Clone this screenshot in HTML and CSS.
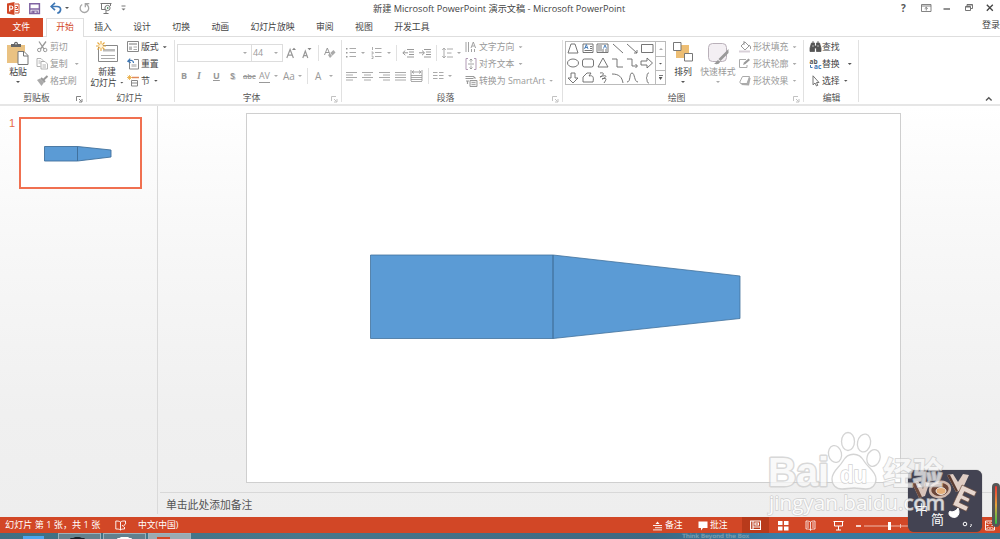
FILE: index.html
```html
<!DOCTYPE html>
<html lang="zh-CN">
<head>
<meta charset="utf-8">
<title>新建 Microsoft PowerPoint 演示文稿 - Microsoft PowerPoint</title>
<link rel="stylesheet" href="styles.css">
</head>
<body>
<div class="app">
  <header class="titlebar">
    <div class="quick">
      <svg width="13" height="13" viewBox="0 0 13 13"><path d="M0 1.6 7.5 0v13L0 11.4z" fill="#d24726"/><path d="M8 2h4v9H8" fill="none" stroke="#d24726"/><path d="M8.500 4.500h2v2h-2M8.500 8.500h2.500" stroke="#d24726" fill="none"/><path d="M2.700 9.500V4h1.500a1.500 1.500 0 0 1 0 3.200H2.700" fill="none" stroke="#fff" stroke-width="1.200"/></svg>
      <svg width="12" height="13" viewBox="0 0 12 13"><path d="M.8 1.800h9.600v9.800H.8z" fill="#fff" stroke="#8064a2" stroke-width="1.500"/><path d="M1 7h9.500" stroke="#8064a2" stroke-width="1.500"/><path d="M3 11.500V9h5.200v2.500" fill="none" stroke="#8064a2" stroke-width="1.200"/><path d="M3.500 9h2v2.500h-2z" fill="#8064a2"/></svg>
      <svg width="13" height="13" viewBox="0 0 13 13"><path d="M1.500 4.500h5.500c5 0 4.500 5.500.3 6.700" fill="none" stroke="#3e77b5" stroke-width="1.700"/><path d="M5 .8 1.200 4.500 5 8.200" fill="none" stroke="#3e77b5" stroke-width="1.700"/></svg>
      <i class="caret dark"></i>
      <svg width="12" height="13" viewBox="0 0 12 13"><path d="M7 2.200A4.300 4.300 0 1 1 3.200 2.500M6.300 5.200V1.600h4" fill="none" stroke="#a6a6a6" stroke-width="1.300"/></svg>
      <svg width="13" height="13" viewBox="0 0 13 13"><path d="M.5 1.500h11M1.500 2v5.500H5M10.500 2v2M3.500 11.500h5M6 8v3.500" fill="none" stroke="#777"/><circle cx="7.500" cy="6" r="2.600" fill="#fff" stroke="#777"/><path d="m7 4.700 2 1.300-2 1.300z" fill="#4a8a60"/></svg>
      <svg width="6" height="8" viewBox="0 0 6 8"><path d="M.5 2h4" stroke="#777"/><path d="M.5 4.500h4l-2 2z" fill="#777"/></svg>
    </div>
    <div class="caption">新建 Microsoft PowerPoint 演示文稿 - Microsoft PowerPoint</div>
    <div class="window-controls">
      <b>?</b>
      <svg width="11" height="10" viewBox="0 0 11 10"><path d="M.5 1.500h9.500v7H.5zM.5 3h9.500M5.250 7.500v-3M3.700 5.700l1.550-1.400 1.550 1.400" fill="none" stroke="#777" stroke-width=".9"/></svg>
      <svg width="8" height="10" viewBox="0 0 8 10"><path d="M.5 6h6.500" stroke="#555" stroke-width="1.300"/></svg>
      <svg width="9" height="10" viewBox="0 0 9 10"><path d="M.5 3.500h5v4h-5zM2 3.500v-2h5.500v4H6M.5 4h5M2 2h5.500" fill="none" stroke="#666" stroke-width=".9"/></svg>
      <svg width="8" height="10" viewBox="0 0 8 10"><path d="m.8 1.700 6 6M6.800 1.700l-6 6" stroke="#444" stroke-width="1.300"/></svg>
    </div>
  </header>

  <nav class="tabs">
    <a class="tab file">文件</a><a class="tab active">开始</a><a class="tab">插入</a><a class="tab">设计</a><a class="tab">切换</a><a class="tab">动画</a><a class="tab">幻灯片放映</a><a class="tab">审阅</a><a class="tab">视图</a><a class="tab">开发工具</a><a class="signin">登录</a>
  </nav>

  <section class="ribbon">
    <div class="group clipboard">
      <div class="body">
        <div class="big">
          <svg width="22" height="25" viewBox="0 0 22 25"><path d="M0 4h18v18H0z" fill="#eac282"/><path d="M4 6V3h3c0-3 4-3 4 0h3v3z" fill="#666"/><circle cx="9" cy="2.700" r=".8" fill="#fff"/><path d="M11 10.500h6l4 4v9H11z" fill="#fff" stroke="#777"/><path d="M16.500 10.500v4.500H21" fill="none" stroke="#777"/></svg>
          <span>粘贴</span><i class="caret dark"></i>
        </div>
        <div class="stack off">
          <div class="cmd"><svg width="12" height="12" viewBox="0 0 12 12"><path d="m2.500.5 5 7.500M9.500.5 4 8" stroke="#999" stroke-width="1.300"/><circle cx="2.700" cy="9" r="1.700" fill="none" stroke="#999"/><circle cx="8.700" cy="9" r="1.700" fill="none" stroke="#999"/></svg><span>剪切</span></div>
          <div class="cmd"><svg width="12" height="12" viewBox="0 0 12 12"><path d="M4 8.500H.5v-8h4l2 2V4M4.500 3.500h4l2.500 2.500v5H4.500zM2 3h2M2 5h2M6 7h3.500M6 9h3.500" fill="#fff" stroke="#aaa" stroke-width=".9"/></svg><span>复制</span><i class="caret far"></i></div>
          <div class="cmd"><svg width="12" height="12" viewBox="0 0 12 12"><path d="m.5 5 3-1.500 4 4L5 11z" fill="#aaa"/><path d="m4.500 3 4 4M7 4.700 11 1" stroke="#999" stroke-width="2"/></svg><span>格式刷</span></div>
        </div>
      </div>
      <div class="label"><span>剪贴板</span><svg class="launch" width="7" height="7" viewBox="0 0 7 7"><path d="M.5 5V.5H5M3 3l2.500 2.500M6 3v3H3" fill="none" stroke="currentColor" stroke-width=".9"/></svg></div>
    </div>

    <div class="group slides">
      <div class="body">
        <div class="big">
          <svg width="23" height="25" viewBox="0 0 23 25"><path d="M3 4.500h18.500v16H2.500V6" fill="#fff" stroke="#888"/><path d="M7 8h12v2.500H7z" fill="#bbb"/><path d="M5 14.500h14M5 17.500h14" stroke="#aaa"/><path d="M5 0v10M0 5h10M1.500 1.500l7 7M8.500 1.500l-7 7" stroke="#e9a93c" stroke-width="1.100"/><circle cx="5" cy="5" r="2" fill="#fff5dd"/></svg>
          <span>新建</span><span class="second">幻灯片<i class="caret dark"></i></span>
        </div>
        <div class="stack">
          <div class="cmd"><svg width="13" height="12" viewBox="0 0 13 12"><path d="M.5.5h11v10H.5z" fill="#fff" stroke="#888"/><path d="M2 2h8v2H2zM2 5.500h3v3.500H2z" fill="#bbb"/><path d="M6.500 6H10M6.500 8.500H10" stroke="#aaa"/></svg><span>版式</span><i class="caret dark"></i></div>
          <div class="cmd"><svg width="13" height="12" viewBox="0 0 13 12"><path d="M2.500 3v8h9V1.500H7" fill="#fff" stroke="#888"/><path d="M4.500 6h5v3h-5z" fill="#ccc"/><path d="M6.500 5C6.500 2 4 2 1.200 3M3.200.7.7 3.300l3 1.500" fill="none" stroke="#3e77b5" stroke-width="1.200"/></svg><span>重置</span></div>
          <div class="cmd"><svg width="13" height="12" viewBox="0 0 13 12"><path d="M4.500 5.500h6v5.500h-6zM4.500 8h6" fill="#fff" stroke="#888"/><path d="M5 2.500h7" stroke="#e08a5a" stroke-width="1.500"/><path d="M2.500 0v5M0 2.500h5M.7.7l3.600 3.600M4.300.7.7 4.300" stroke="#e9a93c" stroke-width=".8"/></svg><span>节</span><i class="caret dark"></i></div>
        </div>
      </div>
      <div class="label"><span>幻灯片</span></div>
    </div>

    <div class="group font off">
      <div class="body rows">
        <div class="row font-a">
          <div class="combo"><i class="caret"></i></div><div class="combo size">44<i class="caret"></i></div>
          <svg width="11" height="12" viewBox="0 0 11 12"><path d="m.8 11 3.300-8.500L7.400 11M2 8.200h4.200" fill="none" stroke="#999" stroke-width="1.200"/><path d="M6 3 8 .8 10 3z" fill="#888"/></svg>
          <svg width="11" height="12" viewBox="0 0 11 12"><path d="m.8 11 2.500-7 2.500 7M1.800 8.700h3" fill="none" stroke="#999" stroke-width="1.200"/><path d="M5.500 1h4l-2 2.200z" fill="#888"/></svg>
          <i class="sep"></i>
          <svg width="12" height="12" viewBox="0 0 12 12"><path d="m.5 8 2.800-7L6 7.500M1.500 5.500H5" fill="none" stroke="#999"/><path d="m4 8 5.500-5 2 2.500L6 11z" fill="#aaa"/><path d="m6 6 2.500 3" stroke="#eee" stroke-width=".8"/></svg>
        </div>
        <div class="row font-b">
          <b>B</b><em>I</em><u>U</u><b class="shadow">S</b><s>abc</s><span class="spacing">AV</span><i class="caret"></i><span class="case">Aa</span><i class="caret"></i><i class="sep"></i><span class="color">A</span><i class="caret"></i>
        </div>
      </div>
      <div class="label"><span>字体</span><svg class="launch" width="7" height="7" viewBox="0 0 7 7"><path d="M.5 5V.5H5M3 3l2.500 2.500M6 3v3H3" fill="none" stroke="currentColor" stroke-width=".9"/></svg></div>
    </div>

    <div class="group paragraph off">
      <div class="body">
        <div class="rows">
          <div class="row para-a">
            <svg width="11" height="12" viewBox="0 0 11 12"><path d="M3.500 1.500H10M3.500 5.500H10M3.500 9.500H10" stroke="#aaa"/><path d="M0 1h1.500v1.500H0zM0 5h1.500v1.500H0zM0 9h1.500v1.500H0z" fill="#999"/></svg><i class="caret"></i>
            <svg width="11" height="12" viewBox="0 0 11 12"><path d="M4 1.500h6.500M4 5.500h6.500M4 9.500h6.500" stroke="#aaa"/><path d="M1.500 0v3M.5 5h1.500v2H.5M.5 9h1.500v2.500H.5" fill="none" stroke="#999" stroke-width=".8"/></svg><i class="caret"></i>
            <i class="sep"></i>
            <svg width="12" height="12" viewBox="0 0 12 12"><path d="M5 2.500h7M7 5h5M7 7.500h5M5 10h7M6 5.800H1M3.300 3.500.8 5.800l2.500 2.400" fill="none" stroke="#999"/></svg>
            <svg width="12" height="12" viewBox="0 0 12 12"><path d="M5 2.500h7M7 5h5M7 7.500h5M5 10h7M0 5.800h5M3 3.500l2.500 2.300L3 8.200" fill="none" stroke="#999"/></svg>
            <i class="sep"></i>
            <svg width="12" height="12" viewBox="0 0 12 12"><path d="M5 2h6M5 6h4.500M5 10h6M2 1v10M.3 3 2 1l1.700 2M.3 9 2 11l1.700-2" fill="none" stroke="#aaa"/></svg><i class="caret"></i>
          </div>
          <div class="row para-b">
            <svg width="12" height="10" viewBox="0 0 12 10"><path d="M0 1.500h11M0 4h7M0 6.500h11M0 9h7" stroke="#aaa"/></svg>
            <svg width="12" height="10" viewBox="0 0 12 10"><path d="M0 1.500h11M2 4h7M0 6.500h11M2 9h7" stroke="#aaa"/></svg>
            <svg width="12" height="10" viewBox="0 0 12 10"><path d="M0 1.500h11M4 4h7M0 6.500h11M4 9h7" stroke="#aaa"/></svg>
            <svg width="12" height="10" viewBox="0 0 12 10"><path d="M0 1.500h11M0 4h11M0 6.500h11M0 9h11" stroke="#aaa"/></svg>
            <svg width="13" height="12" viewBox="0 0 13 12"><path d="M1 5.500h11M1 7.500h11M1 9.500h11M1 11.500h11" stroke="#aaa"/><path d="M1 0v11M12 0v11M2 2h9M4 .5 2 2l2 1.500M9 .5 11 2 9 3.500" fill="none" stroke="#999" stroke-width=".9"/></svg>
            <i class="sep"></i>
            <svg width="12" height="10" viewBox="0 0 12 10"><path d="M0 1.500h4.500M6 1.500h4.500M0 4.500h4.500M6 4.500h4.500M0 7.500h4.500M6 7.500h4.500" stroke="#aaa" stroke-width="1.100"/></svg><i class="caret"></i>
          </div>
        </div>
        <div class="stack">
          <div class="cmd"><svg width="13" height="12" viewBox="0 0 13 12"><path d="M1 1v10M3.500 1v10M6.500 8v3M9.500 8v3M6 7l2.300-6 2.300 6M7 5h2.600" fill="none" stroke="#999" stroke-width=".9"/></svg><span>文字方向</span><i class="caret"></i></div>
          <div class="cmd"><svg width="13" height="12" viewBox="0 0 13 12"><path d="M3 .5H1v11h2M9 .5h2v11H9" fill="none" stroke="#b19bb5"/><path d="M3 6h6M6 1v3.500M6 11V7.500M4.500 2.500 6 1l1.500 1.500M4.500 9.500 6 11l1.500-1.500" fill="none" stroke="#999" stroke-width=".9"/></svg><span>对齐文本</span><i class="caret"></i></div>
          <div class="cmd"><svg width="13" height="12" viewBox="0 0 13 12"><path d="M.5 1.500h8l2 2M.5 3.500h8M1 6h3M2.500 6v3" fill="none" stroke="#999" stroke-width="1.200"/><path d="M5 5.500h7v6H5z" fill="#eee" stroke="#999"/><path d="M6.500 7.500h4M6.500 9.500h4" stroke="#aaa"/></svg><span>转换为 SmartArt</span><i class="caret"></i></div>
        </div>
      </div>
      <div class="label"><span>段落</span><svg class="launch" width="7" height="7" viewBox="0 0 7 7"><path d="M.5 5V.5H5M3 3l2.500 2.500M6 3v3H3" fill="none" stroke="currentColor" stroke-width=".9"/></svg></div>
    </div>

    <div class="group drawing">
      <div class="body">
        <div class="gallery">
          <svg width="89" height="42" viewBox="0 0 89 42" fill="none" stroke="#666" stroke-width=".9">
            <path d="M2 11 5 2h4l3 9z"/><path d="M17 2h10v8.500H17zM24 4.500h2M24 6.500h2M18.500 8.500H26"/><path d="M31 2h11v8.500H31zM33 3v6.500M35 3v6.500M37 7v3M40 7v3"/><path d="m47 2 10 9M61 2l10 9M71 8v3h-3"/><path d="M75.500 2.500h11.500v8H75.500z"/>
            <ellipse cx="7" cy="21" rx="5.500" ry="4"/><rect x="16.500" y="17" width="11" height="8" rx="2"/><path d="m32 25 5-9 5 9z"/><path d="M46 17h5v8h6M61 17h5v7h5M69.500 22l2 2-2 2"/><path d="M75 19h6v-3l5.500 5-5.500 5v-3h-6z"/>
            <path d="M5 31h4v5h3l-5 5-5-5h3z"/><path d="M17 40v-5l4-4h4l-2 3c4-1 5 1 4 6z"/><path d="M34 31c5-1 4 2 0 4 7-3 8 0 2 2 6-2 4 1 2 4"/><path d="M46 32c7 0 10 3 11 9"/><path d="M61 40c4 0 2-9 5-9s2 9 6 9"/><path d="M83 31c-3 0-1 4-3 5 2 1 0 5 3 5"/>
            <path d="m18.500 7 1.800-4.500L22 7M19 5.500h2.500M37.500 6.500l1.500-3.500 1.500 3.500" stroke="#3e77b5"/>
          </svg>
          <div class="scroll"><div><i class="caret up"></i></div><div><i class="caret dark"></i></div><div class="more"><i class="caret dark"></i></div></div>
        </div>
        <div class="big arrange">
          <svg width="22" height="25" viewBox="0 0 22 25"><path d="M4 4h13v13H4z" fill="#edbe74"/><path d="M1.500 1.500h7.500v8H1.500zM12.500 12.500h8v7.500h-8z" fill="#fff" stroke="#777"/></svg>
          <span>排列</span><i class="caret dark"></i>
        </div>
        <div class="big styles off">
          <svg width="24" height="25" viewBox="0 0 24 25"><rect x="2.500" y="2.500" width="18" height="18" rx="4" fill="#f3eff3" stroke="#b9b0b9"/><path d="M22.500 8v4l-8 8-2-2zM12 19l2 2c-1 3-4 2-6 2 2-1 2-3 4-4z" fill="#999"/></svg>
          <span>快速样式</span><i class="caret"></i>
        </div>
        <div class="stack off">
          <div class="cmd"><svg width="13" height="12" viewBox="0 0 13 12"><path d="m2 5 4-4 4 4-4 4zM5 0v4M10 4c2 1 1.500 3 1.500 4" fill="#fff" stroke="#999"/><path d="M0 9.500h11v2H0z" fill="#d8d0d8"/></svg><span>形状填充</span><i class="caret"></i></div>
          <div class="cmd"><svg width="13" height="12" viewBox="0 0 13 12"><path d="M7 1.500H.5v8H8V7" fill="none" stroke="#aaa"/><path d="m4 7 1-2.500L9.500.5l1.500 1.500-4.500 4z" fill="#999"/></svg><span>形状轮廓</span><i class="caret"></i></div>
          <div class="cmd"><svg width="13" height="12" viewBox="0 0 13 12"><path d="m2 10 8 .5 1.500-7-1-1.500z" fill="#aaa"/><path d="M3.500 1.500h7l-2.500 7H1.500L.8 7z" fill="#fff" stroke="#aaa"/></svg><span>形状效果</span><i class="caret"></i></div>
        </div>
      </div>
      <div class="label"><span>绘图</span><svg class="launch pale" width="7" height="7" viewBox="0 0 7 7"><path d="M.5 5V.5H5M3 3l2.500 2.500M6 3v3H3" fill="none" stroke="currentColor" stroke-width=".9"/></svg></div>
    </div>

    <div class="group editing">
      <div class="body"><div class="stack">
        <div class="cmd"><svg width="12" height="12" viewBox="0 0 12 12"><path d="M2 2h3v3h2V2h3l1.500 5v3.500H7V7H5v3.500H.5V7zM2.500 1h2M7.500 1h2" fill="#555" stroke="#555" stroke-width=".8"/><path d="M3.500 4v2M8.500 4v2" stroke="#ccc" stroke-width=".8"/></svg><span>查找</span></div>
        <div class="cmd"><svg class="replace" width="12" height="12" viewBox="0 0 12 12"><text class="mini" x="0" y="5.500">ab</text><text class="mini blue" x="4.500" y="11">ac</text><path d="M1 7v2.500h2" fill="none" stroke="#3e77b5"/></svg><span>替换</span><i class="caret dark wide"></i></div>
        <div class="cmd"><svg width="12" height="12" viewBox="0 0 12 12"><path d="M3.500.8v9l2-1.800 1.500 3 1.300-.7L7 7.500h2.500z" fill="#fff" stroke="#666" stroke-width=".9"/></svg><span>选择</span><i class="caret dark"></i></div>
      </div></div>
      <div class="label"><span>编辑</span></div>
    </div>
    <svg class="collapse" width="8" height="6" viewBox="0 0 8 6"><path d="m1 4.500 2.800-2.700 2.800 2.700" fill="none" stroke="#555" stroke-width="1.400"/></svg>
  </section>

  <main class="workspace">
    <aside class="outline">
      <span class="number">1</span>
      <div class="thumb"><svg width="119" height="68" viewBox="0 0 119 68"><path d="M23.500 27.500h33v14.500h-33zM56.500 27.500l33.500 3.500v7l-33.500 4z" fill="#5b9bd5" stroke="#41719c" stroke-width=".9"/></svg></div>
    </aside>
    <section class="editor">
      <div class="stage"><div class="slide"><svg width="653" height="368" viewBox="0 0 653 368"><path d="M123.500 141h182.500v83.500H123.500zM306 141l187 21v42.500L306 224.500z" fill="#5b9bd5" stroke="#41719c" stroke-width=".8"/></svg></div></div>
      <div class="notes">单击此处添加备注</div>
    </section>
  </main>

  <footer class="status">
    <span class="count">幻灯片 第 1 张，共 1 张</span>
    <svg width="12" height="11" viewBox="0 0 12 11"><path d="M5.500 2v8M5.500 2C4 1 2.500 1 .8 1v8c2 0 3.500 0 4.700 1 1-1 2-1 4-1V7M5.500 2C7 1 8 1 10.500 1v2M7 5l1.300 1.500L11 3" fill="none" stroke="#fff" stroke-width=".9"/></svg>
    <span class="language">中文(中国)</span>
    <div class="views">
      <svg width="10" height="11" viewBox="0 0 10 11"><path d="M0 5.500h9M2 7.700h7M0 9.900h9" stroke="#fff" stroke-width=".9"/><path d="m2.500 4 2-2.500 2 2.500z" fill="#fff"/></svg><span>备注</span>
      <svg width="10" height="11" viewBox="0 0 10 11"><path d="M.5 1.500h9V8H5l-2 2.500V8H.5z" fill="#fff"/></svg><span>批注</span>
      <span class="view current"><svg width="11" height="11" viewBox="0 0 11 11"><path d="M.6 1h10v8.500H.6zM3 1v8.500M3 7h7.500M5 3h3.500v2H5z" fill="none" stroke="#fff" stroke-width="1.100"/></svg></span>
      <svg width="12" height="11" viewBox="0 0 12 11"><path d="M1 1h4.500v4H1zM7 1h4.500v4H7zM1 6.500h4.500v4H1zM7 6.500h4.500v4H7z" fill="#fff"/></svg>
      <svg width="12" height="11" viewBox="0 0 12 11"><path d="M5.500 2v8.500M5.500 2C4 1 2.500 1 1 1v8c2 0 3.500 0 4.500 1 1-1 2.500-1 4.500-1V1C8 1 7 1 5.500 2M2 3h2M2 5h2M2 7h2M7 3h2M7 5h2M7 7h2" fill="none" stroke="#fff" stroke-width=".8"/></svg>
      <svg width="12" height="11" viewBox="0 0 12 11"><path d="M.5 1.500h10M1.500 2v4h8V2M5.500 6v4M3 10h5" fill="none" stroke="#fff"/></svg>
      <svg width="129" height="11" viewBox="0 0 129 11"><path d="M0 6h5" stroke="#fff" stroke-width="1.500"/><path d="M8 6h46M44.500 4v4" stroke="#f3c7bb" stroke-width=".9"/><path d="M32 2h3v8h-3z" fill="#fff"/></svg>
      <svg width="11" height="11" viewBox="0 0 11 11"><path d="M.5 1h9v9h-9zM1.500 5.500h2M6.500 5.500h2M5 2v2M5 7v2M1.500 2l2 2M8.500 2l-2 2M1.500 9l2-2M8.500 9l-2-2" fill="none" stroke="#fff" stroke-width=".9"/></svg>
    </div>
  </footer>
  <div class="taskbar">
    <div class="task explorer"></div><div class="task qq"></div><div class="task browser"></div><div class="task ppt"></div><span class="desktop-text">Think Beyond the Box</span>
  </div>
</div>

<svg class="watermark" width="185" height="90" viewBox="765 428 185 90">
  <g fill="#fff" fill-opacity=".72" stroke="#c9c9c9" stroke-opacity=".8" stroke-width="1.300">
    <ellipse cx="848" cy="441.500" rx="6.500" ry="9"/><ellipse cx="864" cy="443" rx="6.500" ry="9" transform="rotate(12 864 443)"/><ellipse cx="835" cy="454" rx="6.500" ry="8.500" transform="rotate(-12 835 454)"/><ellipse cx="873.500" cy="458" rx="6.500" ry="8.500" transform="rotate(18 873.500 458)"/>
    <path d="M843 461c5-9 16-9 21 0 4 7 12 10 12 18 0 6-4 10-10 10-5 0-7-1-12-1s-7 1-12 1c-6 0-10-4-10-10 0-8 7-11 11-18z"/>
  </g>
  <g class="outlined"><text class="brand" x="768" y="486" textLength="61" lengthAdjust="spacingAndGlyphs">Bai</text><text class="brand cn" x="883" y="484" textLength="60" lengthAdjust="spacingAndGlyphs">经验</text></g>
  <g class="filled"><text class="du" x="840" y="483" textLength="27" lengthAdjust="spacingAndGlyphs">du</text><text class="url" x="769" y="510" textLength="176" lengthAdjust="spacingAndGlyphs">jingyan.baidu.com</text></g>
</svg>
<div class="ime">
  <svg width="74" height="62" viewBox="0 0 74 62">
    <path d="m4 13 6-2 5 8 2-7 5-1-5 15-6 2z" fill="#d9c4ba"/><path d="m4 13 7 15 3-1-7-15z" fill="#6c4a3d"/>
    <ellipse cx="32" cy="19.500" rx="10" ry="7.500" transform="rotate(-12 32 19.500)" fill="#6c4639" stroke="#d2b9ad" stroke-width="2.500"/>
    <ellipse cx="33" cy="21" rx="5" ry="3.500" fill="#e3ad78" stroke="#fff" stroke-width=".8"/>
    <path d="m39 5 6-1 5 8 5-8 6 1-7 15-6 2z" fill="#e0cdc4"/><path d="m39 5 9 17 2-1-8-16z" fill="#5b3b30"/>
    <g transform="translate(54 15) rotate(25)"><path d="M0 0h16v5H5v4h8v4H5v4h10v5H0z" fill="#e6d6ce" stroke="#6a4a3a" stroke-width=".6"/></g>
    <g font-family="Noto Sans CJK SC" font-size="13" fill="#fff"><text x="7" y="44">中</text><text x="23" y="53.500">简</text></g>
    <path d="M42 41c2 2 6 0 8-3 3 6-1 11-6 9-3-1-4-4-2-6z" fill="#fff" stroke="#fff"/><circle cx="57" cy="54" r="1.800" fill="none" stroke="#fff"/><path d="M63 54q1 1-.7 3" stroke="#fff" fill="none"/>
  </svg>
</div>
<div class="meter"></div>
</body>
</html>
```

FILE: styles.css
```css
* { box-sizing: border-box; }
body { margin: 0; width: 1000px; height: 539px; overflow: hidden; background: #fff; color: #444; font: 9px/12px "Open Sans", "Noto Sans CJK SC", sans-serif; white-space: nowrap; }
svg { display: block; flex: none; }
.app { display: flex; flex-direction: column; height: 539px; }

.caret { display: inline-block; flex: none; width: 4px; height: 2px; background: #aaa; clip-path: polygon(0 0, 100% 0, 50% 100%); }
.caret.dark { background: #555; }
.caret.up { transform: rotate(180deg); }
.sep { width: 1px; height: 16px; background: #e1e1e1; }
.off { color: #999; }

.titlebar { display: grid; grid-template-columns: 366px 252px 1fr; align-items: center; height: 18px; padding-left: 7px; }
.quick { display: grid; grid-template-columns: 22px 21px 15px 14px 21px 21px 10px; align-items: center; padding-bottom: 2px; }
.caption { font-size: 9.200px; }
.window-controls { display: grid; grid-template-columns: 20px 22px 22px 21px 14px; align-items: center; justify-content: end; padding-bottom: 2px; }
.window-controls b { font-size: 10px; color: #555; }

.tabs { display: flex; height: 19px; box-shadow: inset 0 -1px #dedede; }
.tab { padding: 3px 10.700px; font-size: 8.850px; }
.file { width: 43px; padding-left: 12.500px; background: #d24726; color: #fff; }
.active { width: 38px; margin: 0 -.5px 0 3px; padding: 2px 0; border: 1px solid #dedede; border-bottom: 0; background: #fff; color: #d24726; text-align: center; }
.signin { margin-left: auto; padding-top: 1px; }

.ribbon { display: flex; height: 69px; padding-top: 1px; border-bottom: 2px solid #e6e6e6; }
.group { display: flex; flex-direction: column; position: relative; font-size: 8.900px; }
.group::after { content: ""; position: absolute; right: 0; top: 2px; width: 1px; height: 62px; background: #e1e1e1; }
.clipboard { width: 87px; }
.slides { width: 88px; }
.font { width: 167px; }
.paragraph { width: 221px; }
.drawing { width: 241px; }
.editing { width: 55px; }
.body { display: flex; height: 53px; }
.label { display: flex; align-items: center; height: 14px; color: #555; }
.label > span { flex: 1; padding-top: 1px; text-align: center; }
.slides .label > span { padding-right: 3px; }
.launch { width: 7px; margin: 4px 4px 0 3px; color: #777; }
.clipboard .launch { margin-left: 3px; }
.font .launch, .paragraph .launch, .pale { color: #bbb; }
.big { display: flex; flex-direction: column; align-items: center; width: 36px; padding-top: 3px; }
.big > span { margin: -1px 0 3px; line-height: 13px; }
.slides .big { width: 40px; }
.slides .big > span { margin: -1px 0 0; }
.slides .big > .second { display: flex; align-items: center; gap: 3px; margin-top: -2px; }
.stack { display: grid; grid-template-rows: repeat(3, 16.700px); padding-top: 1px; }
.cmd { display: flex; align-items: center; }
.cmd svg { width: 13px; }
.clipboard .cmd svg { margin-right: 1px; }
.cmd .caret { margin-left: 4px; }
.cmd .far { margin-left: 7px; }
.cmd .wide { margin-left: 8px; }
.slides .cmd svg { margin-right: 1px; }

.rows { display: flex; flex-direction: column; }
.row { display: grid; align-items: center; }
.font-a { grid-template-columns: 74px 35px 16px 16px 6px 12px; height: 30px; padding-left: 2px; }
.font-b { grid-template-columns: 16px 16px 17px 13px 16px 15px 9px 15px 9px 8px 14px 5px; height: 14px; padding-left: 6px; }
.font-a .combo { display: flex; align-items: center; justify-content: flex-end; width: 75px; height: 18px; padding-right: 4px; border: 1px solid #ddd; color: #999; }
.font-a .size { width: 32px; justify-content: space-between; padding-left: 1px; }
.font-b > * { font-size: 9px; }
.font-b em { font-family: "Liberation Serif"; font-size: 10px; font-weight: bold; }
.font-b u { font-weight: bold; }
.font-b s { font-size: 7.500px; font-weight: 600; }
.shadow { text-shadow: 1px 1px #ccc; }
.spacing { height: 13px; border-bottom: 1px solid #999; width: 11px; letter-spacing: -.3px; line-height: 11px; }
.font-b .case, .font-b .color { font-size: 10px; }

.paragraph .rows { width: 123px; padding-left: 4px; }
.para-a { grid-template-columns: 15px 10px 16px 9px 6px 17px 17px 6px 15px 5px; height: 30px; }
.para-b { grid-template-columns: 16px 17px 16px 15px 18px 5px 15px 5px; height: 14px; }
.paragraph .cmd svg { margin-right: 1px; }

.gallery { display: flex; width: 101px; height: 44px; margin: 3px 0 0 2px; border: 1px solid #bbb; }
.scroll { display: grid; grid-template-rows: 1fr 1fr 1fr; width: 10px; border-left: 1px solid #bbb; }
.scroll div { display: flex; align-items: center; justify-content: center; }
.scroll div + div { border-top: 1px solid #bbb; }
.more .caret { height: 3px; margin-top: 2px; }
.more { background: linear-gradient(#777, #777) center 4px / 4px 1px no-repeat; }
.arrange { margin-left: -1px; }
.styles { margin-left: -1px; }
.drawing .stack { margin-left: 3px; }
.drawing .cmd svg { margin-right: 1px; }
.editing .stack { padding-left: 5px; }
.replace { overflow: visible; }
.mini { font: bold 6.500px "Open Sans"; fill: #555; }
.blue { fill: #3e77b5; }
.collapse { margin: 58px 7px 0 auto; }

.workspace { display: flex; height: 411px; background: linear-gradient(#fff 0, #f8f8f8 30%, #f0f0f0 75%, #eee); }
.outline { display: flex; align-items: flex-start; width: 158px; height: 408px; padding: 11px 0 0 9px; border-right: 1px solid #dadada; }
.number { width: 10px; font: 11px/12px "Liberation Sans"; color: #e8694a; }
.thumb { width: 123px; height: 72px; background: #fff; border: 2px solid #f07050; }
.editor { display: flex; flex-direction: column; flex: 1; padding-left: 2px; }
.stage { height: 387px; padding: 7px 0 0 86px; border-bottom: 1px solid #d8d8d8; }
.slide { width: 655px; height: 370px; border: 1px solid #cfcfcf; background: #fff; }
.notes { padding: 4px 6px; font-size: 10.800px; line-height: 15px; color: #555; }

.status { display: flex; align-items: center; height: 16px; background: #d24726; color: #fff; padding-left: 5px; }
.count { width: 110px; font-size: 9.150px; }
.language { margin-left: 11px; font-size: 8.800px; }
.views { display: grid; grid-template-columns: 12px 33px 12px 32px 35px 28px 28px 23px 129px 15px; align-items: center; width: 347px; margin-left: auto; }
.views > span { font-size: 8.900px; }
.view { display: flex; align-items: center; justify-content: center; width: 27px; height: 16px; background: #b83a1b; }

.taskbar { display: flex; height: 6px; background: linear-gradient(90deg, #3f6f83, #47788c 30%, #3d6882 65%, #377da8 78%, #3d718d); overflow: hidden; }
.task { width: 43px; margin-right: 2px; border: 1px solid #9bb3bd; border-bottom: 0; background: #66838f; }
.explorer { width: 21px; margin: 3px 14px 0 23px; border: 0; background: #4da7f0; }
.qq { background: radial-gradient(ellipse at 45% 100%, #172029 0 7px, #64818e 8px); }
.browser { background: radial-gradient(ellipse at 50% 100%, #fff 0 7px, #62808e 8px); }
.ppt { background: linear-gradient(#d24726, #d24726) 8px 3px / 13px 3px no-repeat #9aabb2; }
.desktop-text { margin-left: 489px; font: bold 6px/6px "DejaVu Sans"; color: #739bae; letter-spacing: -.35px; }

.ime { position: absolute; left: 908px; top: 470px; width: 74px; height: 62px; border-radius: 6px; background: #434352; box-shadow: 0 0 1px #555; }
.meter { position: absolute; left: 992px; top: 483px; width: 8px; height: 44px; border: 3px solid #555; border-radius: 4px; background: linear-gradient(#e33, #e6a33c 50%, #2fc44a); }
.watermark { position: absolute; left: 765px; top: 428px; z-index: 1; }
.outlined { fill: #f8f8f8; stroke: #ccc; stroke-width: 3px; stroke-linejoin: round; paint-order: stroke; opacity: .75; }
.brand { font: bold 40px "Liberation Sans"; }
.cn { font: bold 31px "Noto Sans CJK SC"; stroke-width: 2px; }
.filled { fill: #fff; stroke: #c8c8c8; stroke-width: 1.400px; paint-order: stroke; opacity: .8; }
.du { font: bold 23px "Liberation Sans"; }
.url { font: 20px "Open Sans"; }
```
